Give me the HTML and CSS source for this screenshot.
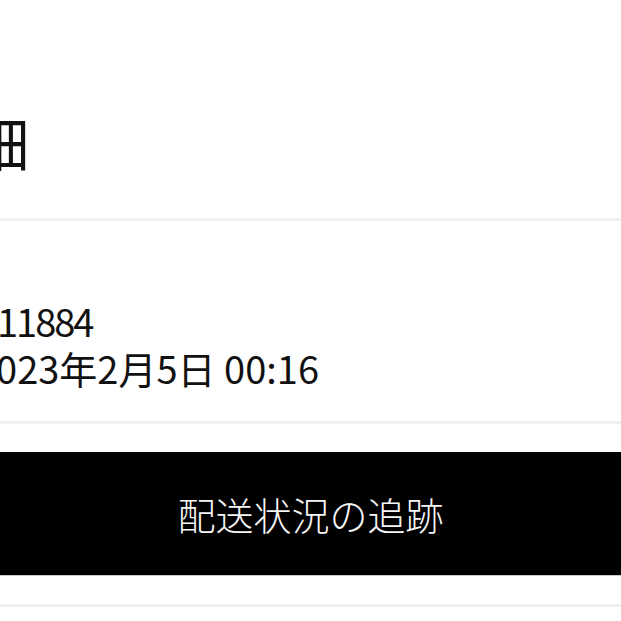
FILE: index.html
```html
<!DOCTYPE html>
<html lang="ja">
<head>
  <meta charset="UTF-8">
  <meta name="viewport" content="width=device-width, initial-scale=1.0">
  <title>注文詳細</title>
  <link rel="stylesheet" href="styles.css">
</head>
<body>
<div id="page">
  <div class="section" id="recipient">
    <div class="name">川畑</div>
  </div>
  <div class="section" id="order">
    <div class="line order-no">11884</div>
    <div class="line order-date">2023年2月5日 00:16</div>
  </div>
  <div class="section" id="actions">
    <button class="track">配送状況の追跡</button>
  </div>
</div>
</body>
</html>
```

FILE: styles.css
```css
body {
  margin: 0;
  background: #fff;
  color: #111;
  font-family: "Noto Sans CJK JP", "Noto Sans", sans-serif;
  overflow: hidden;
}
#page {
  width: 100%;
}
.section {
  border-bottom: 3px solid #f0f0f0;
  white-space: nowrap;
}
#recipient {
  padding: 112px 0 45px;
}
.name {
  font-size: 58px;
  line-height: 61px;
  margin-left: -87px;
}
#order {
  padding: 76px 0 30px;
}
.line {
  font-size: 38px;
  line-height: 47px;
}
.order-no {
  margin-left: -3px;
  letter-spacing: -2px;
}
.order-date {
  margin-left: -25px;
}
#actions {
  padding: 28px 0 28px;
}
.track {
  display: flex;
  align-items: center;
  justify-content: center;
  width: 100%;
  height: 124px;
  margin: 0;
  padding: 0;
  border: 0;
  border-bottom: 1px solid #c8c8c8;
  background: #000;
  color: #f6f6f6;
  font-family: inherit;
  font-size: 38px;
  font-weight: 300;
}
```
